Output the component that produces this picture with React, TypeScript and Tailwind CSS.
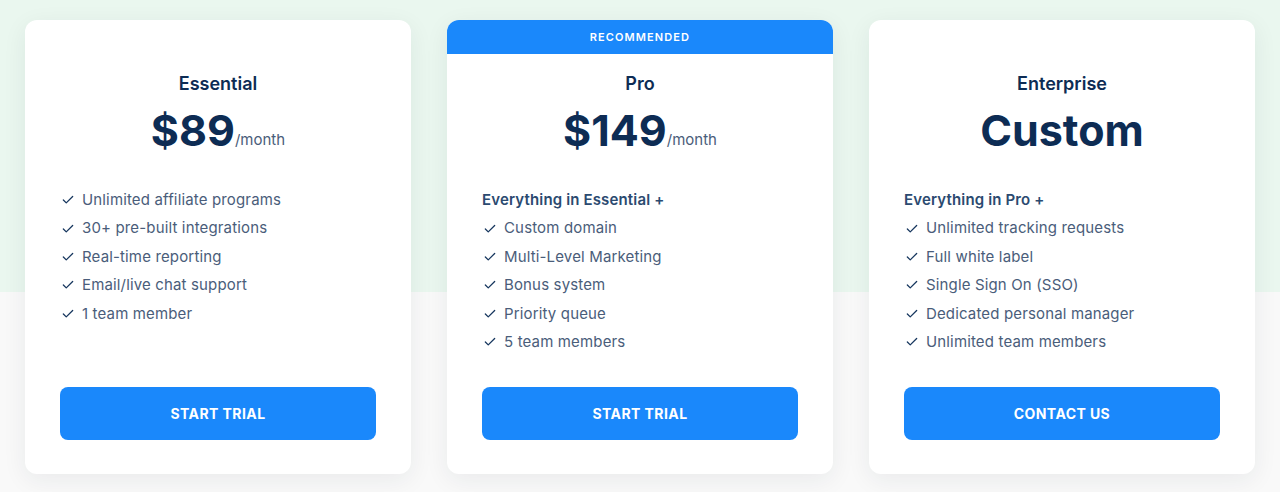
import { Check } from 'lucide-react'

type Plan = {
  name: string
  price: string
  per?: string
  lead?: string
  features: string[]
  cta: string
  recommended?: boolean
}

const plans: Plan[] = [
  {
    name: 'Essential',
    price: '$89',
    per: '/month',
    features: [
      'Unlimited affiliate programs',
      '30+ pre-built integrations',
      'Real-time reporting',
      'Email/live chat support',
      '1 team member',
    ],
    cta: 'START TRIAL',
  },
  {
    name: 'Pro',
    price: '$149',
    per: '/month',
    lead: 'Everything in Essential +',
    features: ['Custom domain', 'Multi-Level Marketing', 'Bonus system', 'Priority queue', '5 team members'],
    cta: 'START TRIAL',
    recommended: true,
  },
  {
    name: 'Enterprise',
    price: 'Custom',
    lead: 'Everything in Pro +',
    features: [
      'Unlimited tracking requests',
      'Full white label',
      'Single Sign On (SSO)',
      'Dedicated personal manager',
      'Unlimited team members',
    ],
    cta: 'CONTACT US',
  },
]

function PlanCard({ plan }: { plan: Plan }) {
  return (
    <div className="relative flex h-[454px] w-[386px] flex-col rounded-xl bg-white px-[35px] pb-[34px] pt-[52px] shadow-[0_6px_24px_rgba(30,40,60,0.07)]">
      {plan.recommended && (
        <div className="absolute inset-x-0 top-0 flex h-[34px] items-center justify-center rounded-t-xl bg-[#1a88fb] text-[11px] font-semibold tracking-[0.1em] text-white">
          RECOMMENDED
        </div>
      )}
      <h3 className="text-center text-[18px] font-semibold leading-6 text-[#0d2c54]">{plan.name}</h3>
      <div className="mt-[11px] flex items-end justify-center">
        <span className="text-[43px] font-bold leading-[46px] text-[#0d2c54]">{plan.price}</span>
        {plan.per && <span className="mb-[3px] text-[15px] leading-5 text-[#4a5d7a]">{plan.per}</span>}
      </div>
      <ul className="mt-[33px] flex flex-col text-[15px] leading-[28.4px] tracking-[0.01em] text-[#4a5d7a]">
        {plan.lead && <li className="font-semibold text-[#2b4a70]">{plan.lead}</li>}
        {plan.features.map((f) => (
          <li key={f} className="flex items-center gap-[7px] pl-[1px]">
            <Check size={14} strokeWidth={2.2} className="shrink-0 text-[#16365e]" />
            {f}
          </li>
        ))}
      </ul>
      <button className="mt-auto h-[53px] w-full rounded-lg bg-[#1a88fb] text-[14px] font-bold tracking-[0.03em] text-white">
        {plan.cta}
      </button>
    </div>
  )
}

export default function App() {
  return (
    <div
      className="relative h-[492px] w-[1280px] overflow-hidden bg-[#f9f9f9]"
      style={{ fontFamily: 'Inter, "Noto Sans", sans-serif' }}
    >
      <div className="absolute inset-x-0 top-0 h-[292px] bg-[#eaf7ef]" />
      <div className="relative flex justify-center gap-[36px] pt-[20px]">
        {plans.map((p) => (
          <PlanCard key={p.name} plan={p} />
        ))}
      </div>
    </div>
  )
}
